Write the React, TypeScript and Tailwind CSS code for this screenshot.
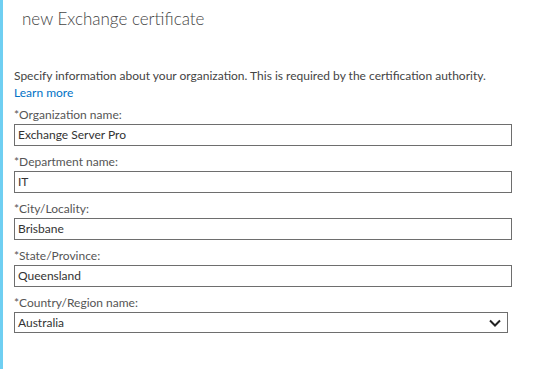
import React from 'react';

const fields = [
  { label: '*Organization name:', value: 'Exchange Server Pro' },
  { label: '*Department name:', value: 'IT' },
  { label: '*City/Locality:', value: 'Brisbane' },
  { label: '*State/Province:', value: 'Queensland' },
];

const App = () => {
  return (
    <div
      className="min-h-[369px] w-[550px] bg-white border-l-[3px] border-[#6fcff2] text-[#333]"
      style={{ fontFamily: 'Lato, "Open Sans", sans-serif' }}
    >
      <h1 className="pl-[19px] pt-[7px] text-[17px] leading-[24px] font-light text-[#444]">new Exchange certificate</h1>

      <div className="pl-[11px] pr-[38px] pt-[36px]">
        <p className="text-[12px] leading-[17px] text-[#444]">
          Specify information about your organization. This is required by the certification authority.
        </p>
        <a href="#" className="block text-[12px] leading-[17px] text-[#0072c6]">
          Learn more
        </a>

        <div className="mt-[5px] flex flex-col gap-[7px]">
          {fields.map((f) => (
            <div key={f.label} className="flex flex-col">
              <label className="text-[12px] leading-[17px] text-[#555] mb-[1px]">{f.label}</label>
              <div className="h-[22px] border border-[#6e6e6e] px-[3px] flex items-center text-[12px] text-[#333]">
                {f.value}
              </div>
            </div>
          ))}
          <div className="flex flex-col">
            <label className="text-[12px] leading-[17px] text-[#555] mb-[1px]">*Country/Region name:</label>
            <div className="h-[21px] w-[494px] border border-[#6e6e6e] pl-[3px] pr-[6px] flex items-center justify-between text-[12px] text-[#333]">
              <span>Australia</span>
              <svg width="12" height="8" viewBox="0 0 12 8" fill="none">
                <path d="M1 1.5 L6 6.5 L11 1.5" stroke="#222" strokeWidth="2" />
              </svg>
            </div>
          </div>
        </div>
      </div>
    </div>
  );
};

export default App;
